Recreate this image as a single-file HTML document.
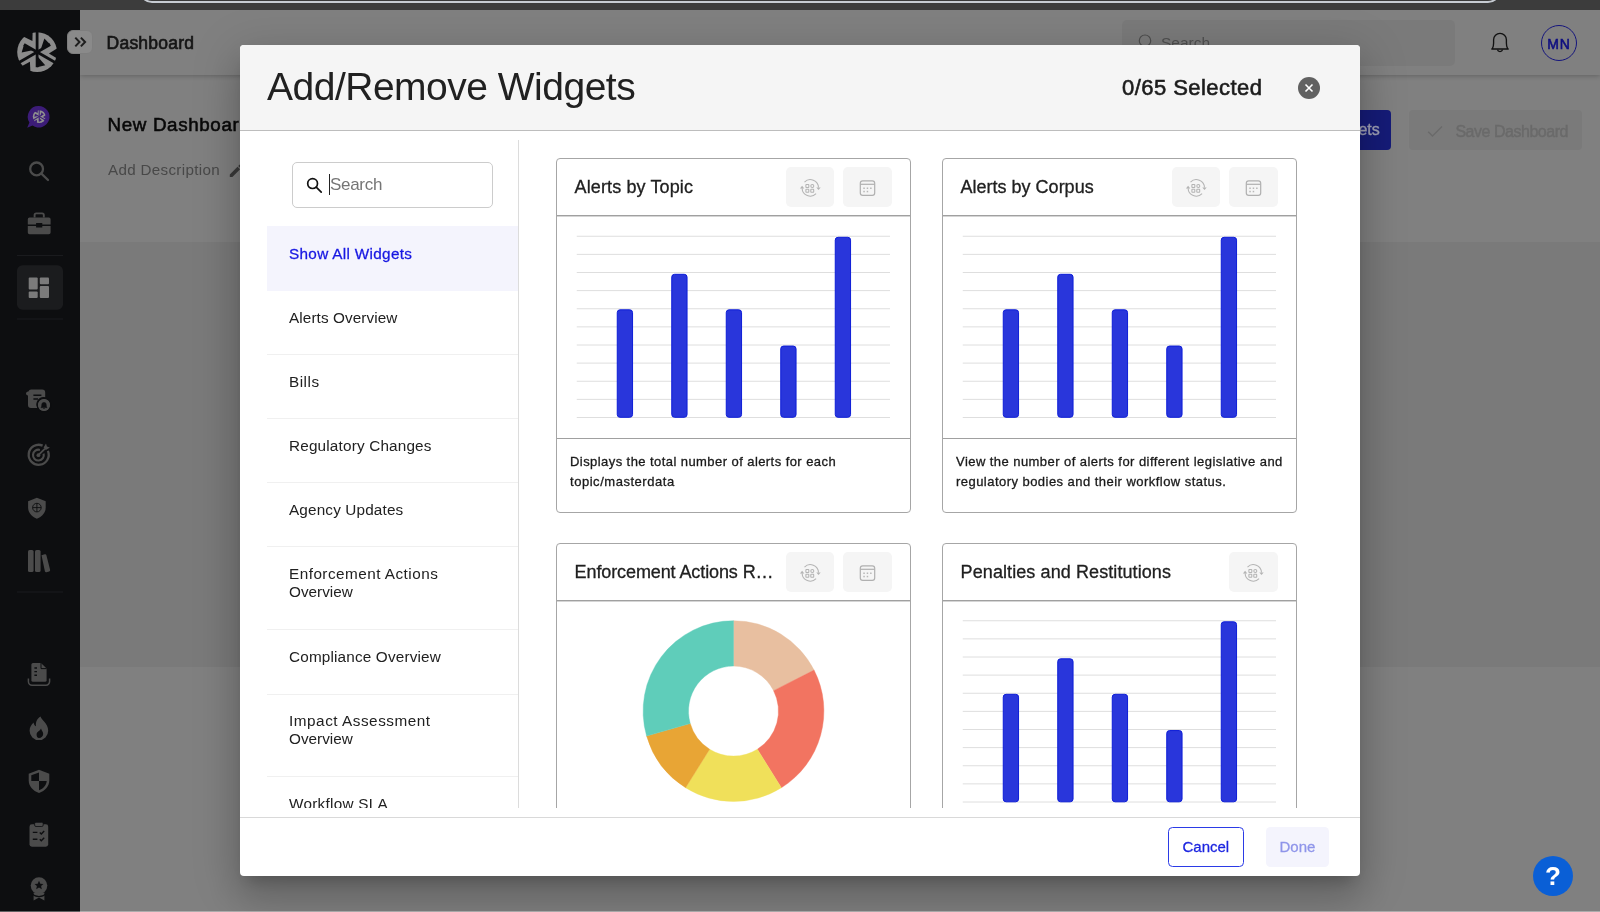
<!DOCTYPE html>
<html lang="en">
<head>
<meta charset="utf-8">
<title>Dashboard</title>
<style>
*{box-sizing:border-box;margin:0;padding:0}
html,body{width:1600px;height:912px;overflow:hidden;background:#808080;font-family:"Liberation Sans",sans-serif;color:#212121}
.abs{position:absolute}
#page{position:absolute;left:0;top:0;width:1600px;height:912px;overflow:hidden;background:#808080}
#chrome{position:absolute;left:0;top:0;width:1600px;height:10px;background:#3c3c3c;overflow:hidden;z-index:50}
#chrome i{position:absolute;left:138.5px;top:-30px;width:1362px;height:33.2px;border:2.2px solid #c6cbd2;border-radius:13px;background:#393939}
#hdr{position:absolute;left:80px;top:10px;width:1520px;height:65px;background:#808080;box-shadow:0 1px 5px rgba(0,0,0,.24);z-index:2}
#band{position:absolute;left:80px;top:242px;width:1520px;height:425px;background:#7a7a7a}
#botline{position:absolute;left:0;top:909px;width:1600px;height:3px;background:#8a8a8a;z-index:1}
.t{position:absolute;white-space:nowrap;line-height:1}
#side{position:absolute;left:0;top:0;width:80px;height:912px;background:#0d0e10;z-index:5}
.sep{position:absolute;left:17px;width:46px;height:1px;background:#1b1c1f}
#active{position:absolute;left:17px;top:255px;width:46px;height:45px;border-radius:6px;background:#1b1c1e}
#toggle{position:absolute;left:66.5px;top:29.7px;width:26px;height:24.5px;border-radius:6px;background:#8a8a8a;border:1px solid #7e7e7e;z-index:6}
#modal{position:absolute;left:240px;top:45px;width:1120px;height:831px;background:#fff;border-radius:4px;z-index:20;
 box-shadow:0 11px 15px -7px rgba(0,0,0,.2),0 24px 38px 3px rgba(0,0,0,.14),0 9px 46px 8px rgba(0,0,0,.12)}
#mh{position:absolute;left:0;top:0;width:1120px;height:86px;background:#f5f5f5;border-bottom:1px solid #bdbdbd;border-radius:4px 4px 0 0}
#scroll{position:absolute;left:0;top:87px;width:1120px;height:676px;overflow:hidden}
#mf{position:absolute;left:0;top:772px;width:1120px;height:59px;border-top:1px solid #d9d9d9}
#title{left:27px;top:22px;font-size:39px;color:#212121}
#sel{left:882px;top:31.8px;font-size:22px;color:#1c1c1c;-webkit-text-stroke:.6px #1c1c1c}
#close{position:absolute;left:1058px;top:32px;width:22px;height:22px;border-radius:50%;background:#616161}
#sbox{position:absolute;left:52px;top:30px;width:201px;height:46px;border:1px solid #ccc;border-radius:5px;background:#fff}
#vdiv{position:absolute;left:278px;top:8px;width:1px;height:700px;background:#dcdcdc}
.li{position:absolute;left:27px;width:251px;border-bottom:1px solid #f0f0f0;font-size:15.3px;line-height:18.2px;color:#212121}
.li span{position:absolute;left:22px;top:19px;white-space:nowrap}
.li.on{background:#f4f4fd;border-bottom:none;color:#1717e2}
.li.on span{-webkit-text-stroke:.28px #1717e2}
.card{position:absolute;width:355px;height:355px;border:1px solid #a6a6a6;border-radius:4px;background:#fff;overflow:hidden}
.card .ch{position:absolute;left:0;top:0;width:353px;height:57px;border-bottom:1px solid #a0a0a0;box-shadow:0 1px 0 rgba(150,150,150,.4)}
.card .ct{position:absolute;left:17.6px;top:19px;font-size:18px;line-height:1;white-space:nowrap;color:#212121;-webkit-text-stroke:.3px #1c1c1c}
.card .cd{position:absolute;left:0;top:279px;width:353px;height:74px;border-top:1px solid #a0a0a0;font-size:13px;line-height:20px;color:#1a1a1a;padding:13.3px 0 0 13px;-webkit-text-stroke:.3px #1a1a1a;white-space:nowrap}
.card .cd span{display:block}
.ib{position:absolute;top:8.1px;width:48.4px;height:39.9px;border-radius:5px;background:#f5f5f5}
.ib svg{position:absolute;left:0;top:0;width:48.5px;height:40px}
.card svg.chart{position:absolute;left:0;top:58px}
#cancel{position:absolute;left:928px;top:9px;width:76px;height:40px;border:1px solid #2b3be6;border-radius:4.5px;color:#1c25e0;font-size:15px;-webkit-text-stroke:.28px #1c25e0}
#done{position:absolute;left:1026px;top:9px;width:63px;height:40px;border-radius:4.5px;background:#f4f4fd;color:#8f95ea;font-size:15px;-webkit-text-stroke:.28px #8f95ea}
#cancel span,#done span{position:absolute;top:10.2px;white-space:nowrap;line-height:18px}
#done span{top:11.2px}
#help{position:absolute;left:1533px;top:856px;width:40px;height:40px;border-radius:50%;background:#0a5fd6;z-index:30;color:#fff;font-weight:bold;font-size:26px;text-align:center;line-height:40px}
#bgz{position:absolute;left:0;top:0;width:1600px;height:912px;z-index:3}
#hsb{position:absolute;left:1122px;top:20px;width:333px;height:45.5px;border-radius:5px;background:#7a7a7a}
#av{position:absolute;left:1541px;top:25px;width:36px;height:36px;border-radius:50%;border:1.2px solid #14147c}
#wbtn{position:absolute;left:1200px;top:110px;width:191.3px;height:40px;border-radius:4px;background:#151b78}
#svbtn{position:absolute;left:1409.4px;top:110px;width:172.5px;height:40px;border-radius:4px;background:#7a7a7a}
#botline{top:910.7px;height:1.3px;background:rgba(255,255,255,.35);z-index:60}
#page{filter:opacity(1)}
#modal,#bgz{will-change:transform}
</style>
</head>
<body>
<div id="page">
<div id="chrome"><i></i></div>
<div id="band"></div>
<div id="hdr"></div>
<div id="botline"></div>
<div id="side"><svg class="abs" style="left:0;top:0" width="80" height="912" viewBox="0 0 80 912"><g transform="translate(37.1 52.1)"><circle r="19.9" fill="#8b8b8b"/><g fill="#0d0e10" transform="rotate(0)"><rect x="-1.39" y="-20.40" width="2.79" height="35.52"/><path d="M0 3.98L0 15.12L8.16 13.13Z"/><path d="M-6.64 20.44L-7.19 9.54L-15.97 14.38Z"/></g><g fill="#0d0e10" transform="rotate(120)"><rect x="-1.39" y="-20.40" width="2.79" height="35.52"/><path d="M0 3.98L0 15.12L8.16 13.13Z"/><path d="M-6.64 20.44L-7.19 9.54L-15.97 14.38Z"/></g><g fill="#0d0e10" transform="rotate(240)"><rect x="-1.39" y="-20.40" width="2.79" height="35.52"/><path d="M0 3.98L0 15.12L8.16 13.13Z"/><path d="M-6.64 20.44L-7.19 9.54L-15.97 14.38Z"/></g></g><path d="M38.8 106.1a10.7 10.7 0 1 1-6.2 19.4l-5.4 2.3 2.2-5.3A10.7 10.7 0 0 1 38.8 106.1z" fill="#3c1c78"/><g transform="translate(39.2 116.6)"><circle r="6.4" fill="#8f8f8f"/><g fill="#3c1c78" transform="rotate(0)"><rect x="-0.51" y="-6.90" width="1.02" height="11.76"/><path d="M0 1.28L0 4.86L2.62 4.22Z"/><path d="M-2.14 6.57L-2.31 3.07L-5.14 4.63Z"/></g><g fill="#3c1c78" transform="rotate(120)"><rect x="-0.51" y="-6.90" width="1.02" height="11.76"/><path d="M0 1.28L0 4.86L2.62 4.22Z"/><path d="M-2.14 6.57L-2.31 3.07L-5.14 4.63Z"/></g><g fill="#3c1c78" transform="rotate(240)"><rect x="-0.51" y="-6.90" width="1.02" height="11.76"/><path d="M0 1.28L0 4.86L2.62 4.22Z"/><path d="M-2.14 6.57L-2.31 3.07L-5.14 4.63Z"/></g></g><g fill="none" stroke="#4b4b4b" stroke-width="2.3"><circle cx="36.6" cy="168.9" r="6.4"/><path d="M41.4 173.6l6.6 6.4" stroke-linecap="round"/></g><path d="M34.6 217.6v-2.6a1.6 1.6 0 0 1 1.6-1.6h6a1.6 1.6 0 0 1 1.6 1.6v2.6" fill="none" stroke="#4b4b4b" stroke-width="1.9"/><path d="M29.6 217.4h19.2a1.8 1.8 0 0 1 1.8 1.8v5.3h-8.3v-1.4h-6.2v1.4h-8.3v-5.3a1.8 1.8 0 0 1 1.8-1.8zM27.8 226.1h8.3v1.5h6.2v-1.5h8.3v6.4a1.8 1.8 0 0 1-1.8 1.8H29.6a1.8 1.8 0 0 1-1.8-1.8z" fill="#4b4b4b"/><rect x="17" y="255" width="46" height="1" fill="#1a1b1e"/><rect x="17" y="318.5" width="46" height="1" fill="#1a1b1e"/><rect x="17" y="591.5" width="46" height="1" fill="#1a1b1e"/><rect x="17" y="265.3" width="46" height="44.4" rx="5.5" fill="#1b1c1e"/><g fill="#7b7b7b"><rect x="28.7" y="277.5" width="9" height="12" rx="1"/><rect x="28.7" y="291.4" width="9" height="6.7" rx="1"/><rect x="39.8" y="277.5" width="9.2" height="6.7" rx="1"/><rect x="39.8" y="286.1" width="9.2" height="12" rx="1"/></g><path d="M31.6 389.6h10.6a3 3 0 0 1 3 3v4.6a7.2 7.2 0 0 0-7.6 10.9H31a3 3 0 0 1-3-3v-9.6h-0.2a2 2 0 0 1-1-3.6 2 2 0 0 1 1.6-.4 3 3 0 0 1 3.2-1.9z" fill="#4b4b4b"/><path d="M33.4 395.2h8M33.4 399h4.6" stroke="#0d0e10" stroke-width="1.5"/><circle cx="44" cy="405" r="6" fill="#4b4b4b"/><circle cx="44" cy="405" r="6.9" fill="none" stroke="#0d0e10" stroke-width="1.1"/><circle cx="44" cy="405" r="6" fill="#4b4b4b"/><path d="M41 407.6c.7-.8.8-1.6.8-3a2.2 2.2 0 0 1 4.4 0c0 1.4.1 2.2.8 3zM43.1 408.5h1.8" fill="#0d0e10" stroke="#0d0e10" stroke-width=".6"/><g fill="none" stroke="#4b4b4b"><path d="M47.9 450.9A10 10 0 1 1 42.6 445.6" stroke-width="2.3"/><path d="M43.6 453.6A5.4 5.4 0 1 1 39.9 449.9" stroke-width="2.1"/></g><circle cx="38.4" cy="455.2" r="1.9" fill="#4b4b4b"/><path d="M38.4 455.2l6.6-6.6" stroke="#4b4b4b" stroke-width="1.8"/><path d="M43.6 447.6l2.4-4 .9 3 3 .9-4 2.4z" fill="#4b4b4b"/><path d="M36.9 497.8l8.8 3.4v6.2c0 5.2-3.6 9.4-8.8 11.3-5.2-1.9-8.8-6.1-8.8-11.3v-6.2z" fill="#4b4b4b"/><g fill="none" stroke="#0d0e10" stroke-width=".9"><circle cx="36.9" cy="507.6" r="4.3"/><path d="M32.6 507.6h8.6M36.9 503.3v8.6"/></g><g fill="#4b4b4b"><rect x="28" y="550" width="5.6" height="22" rx="1.6"/><rect x="35" y="550" width="5.6" height="22" rx="1.6"/><path d="M41.5 555.3l3.3-1a1.3 1.3 0 0 1 1.6.9l3.7 14.6a1.3 1.3 0 0 1-.9 1.6l-2.7.8a1.3 1.3 0 0 1-1.6-.9z"/></g><path d="M33 663h8l5.6 5.6v11.6a1.6 1.6 0 0 1-1.6 1.6H33a1.6 1.6 0 0 1-1.6-1.6V664.6A1.6 1.6 0 0 1 33 663z" fill="#4b4b4b"/><path d="M41 663v5.6h5.6" fill="none" stroke="#0d0e10" stroke-width="1"/><path d="M34.4 668h2.6M34.4 671.6h2.6M34.4 675.2h2.6" stroke="#0d0e10" stroke-width="1.4"/><path d="M28.4 678.6v3a3.6 3.6 0 0 0 3.6 3.6h14a3.6 3.6 0 0 0 3.6-3.6v-3" fill="none" stroke="#4b4b4b" stroke-width="1.5"/><path d="M40.6 716.6c.4 3.4 7.6 6.4 7.6 14.2a9.3 9.3 0 0 1-18.6 0c0-3.6 1.7-6.3 4-8.4.2 1.8 1 3.2 2.4 3.8-.6-4 1.2-7.6 4.6-9.6zM39 738c2.4 0 4.2-1.8 4.2-4 0-2.4-1.6-3.4-2.2-5.600-.8 2.600-4.400 2.800-4.400 6 0 2 .8 3.600 2.400 3.600z" fill="#4b4b4b" fill-rule="evenodd"/><path d="M39 769.8l10.300 3.900v6.500c0 5.800-4.100 10.700-10.300 12.700-6.200-2-10.300-6.900-10.300-12.700v-6.500z" fill="#4b4b4b"/><path d="M39 772.400v8.600h-7.700v-5.700zM39 781h7.700c-.3 4-3.200 7.600-7.700 9.300z" fill="#0d0e10"/><rect x="29.5" y="824.300" width="18.7" height="22.400" rx="2.400" fill="#4b4b4b"/><rect x="34.600" y="822.300" width="8.600" height="4.200" rx="1.400" fill="#4b4b4b" stroke="#0d0e10" stroke-width=".8"/><g stroke="#0d0e10" stroke-width="1.400" fill="none"><path d="M32.800 832.400h4.600M32.800 839.200h4.600M39.800 832.400l1.500 1.500 2.900-3M39.800 839.200l1.500 1.500 2.900-3"/></g><circle cx="39" cy="885.600" r="8.300" fill="#4b4b4b"/><path d="M33.600 892.400v8l5.400-2.800 5.400 2.800v-8z" fill="#4b4b4b"/><path d="M39 880.800l1.300 2.900 3.100.3-2.300 2.100.7 3.100-2.800-1.600-2.800 1.600.7-3.100-2.300-2.100 3.100-.3z" fill="#0d0e10"/><path d="M32 893.600a9.600 9.600 0 0 0 14 0" fill="none" stroke="#0d0e10" stroke-width="1.100"/></svg></div>
<div id="toggle"><svg class="abs" style="left:-1px;top:-1px" width="26" height="24" viewBox="0 0 26 24" fill="none" stroke="#1e1e1e" stroke-width="2"><path d="M8.300 7.600l4.200 4.400-4.200 4.400M13.900 7.600l4.200 4.400-4.200 4.400"/></svg></div>
<div id="bgz">
<div class="t" id="hd" style="letter-spacing:0.219px;left:106.6px;top:35.1px;font-size:17.5px;;color:#151515;-webkit-text-stroke:.65px #151515">Dashboard</div>
<div id="hsb"><svg class="abs" style="left:14px;top:12px" width="22" height="22" viewBox="0 0 22 22" fill="none" stroke="#4d4d4d" stroke-width="1.2"><circle cx="9" cy="8.7" r="5.7"/><path d="M13.2 13l4.6 4.6"/></svg><div class="t" id="hs" style="left:39px;top:14.5px;font-size:15.5px;color:#4f4f4f">Search</div></div>
<svg class="abs" style="left:1486px;top:28px;z-index:3" width="28" height="28" viewBox="0 0 28 28" fill="none" stroke="#111" stroke-width="1.35" stroke-linejoin="round"><path d="M5.3 21h17.4M6.4 20.6c1-1.6 1.2-3 1.2-5.6v-3.2a6.4 6.4 0 0 1 12.8 0v3.2c0 2.6.2 4 1.2 5.6"/><path d="M11.4 21.6a2.7 2.7 0 0 0 5.2 0"/></svg>
<div id="av"><div class="t" id="mn" style="letter-spacing:1.000px;left:5.2px;top:11.3px;font-size:14px;color:#0e0e80;-webkit-text-stroke:.55px #0e0e80">MN</div></div>
<div class="t" id="nd" style="left:107.6px;top:115.6px;font-size:18.8px;;color:#080808;-webkit-text-stroke:.55px #080808;z-index:3"><span id="nd1" style="letter-spacing:0.632px;">New Dashboar</span>d</div>
<div class="t" id="ad" style="letter-spacing:0.314px;left:108px;top:162px;font-size:15.2px;color:#484848;z-index:3">Add Description</div>
<svg class="abs" style="left:228px;top:163px;z-index:3" width="16" height="16" viewBox="0 0 16 16"><path d="M1.8 11.4V14h2.6l7.7-7.7-2.6-2.6zM14.1 4.3a.7.7 0 0 0 0-1l-1.6-1.6a.7.7 0 0 0-1 0l-1.3 1.3 2.6 2.6z" fill="#3a3a3a"/></svg>
<div id="wbtn"><div class="t" id="wb" style="right:11.5px;top:12px;font-size:16px;color:#a0a1b6;-webkit-text-stroke:.4px #a0a1b6">Add/Remove Widgets</div></div>
<div id="svbtn"><svg class="abs" style="left:17px;top:12px" width="18" height="18" viewBox="0 0 18 18" fill="none" stroke="#6a6a6a" stroke-width="1.4"><path d="M2.2 9.8l4.3 4.3 9.5-9.5"/></svg><div class="t" id="sv" style="letter-spacing:-0.469px;left:46px;top:14px;font-size:16px;color:#6a6a6a;-webkit-text-stroke:.45px #6a6a6a">Save Dashboard</div></div>
</div>

<div id="modal">
<div id="mh"><div class="t" id="title" style="letter-spacing:-0.500px;">Add/Remove Widgets</div><div class="t" id="sel" style="letter-spacing:0.450px;">0/65 Selected</div>
<div id="close"><svg width="22" height="22" viewBox="0 0 22 22"><path d="M7.5 7.5l7 7M14.5 7.5l-7 7" stroke="#fff" stroke-width="1.6" fill="none"/></svg></div></div>
<div id="scroll"><div id="sbox"><svg class="abs" style="left:12px;top:13px" width="18" height="18" viewBox="0 0 18 18" fill="none" stroke="#111" stroke-width="1.7"><circle cx="7.6" cy="7.6" r="4.9"/><path d="M11.2 11.2l5 5" stroke-linecap="round"/></svg>
<div class="abs" style="left:36px;top:11px;width:1px;height:21px;background:#222"></div>
<div class="t" id="stxt" style="left:37px;top:13px;font-size:17px;color:#757575;letter-spacing:-0.300px;">Search</div></div><div id="vdiv"></div><div class="li on" style="top:94px;height:65px"><span id="li0a" style="top:19.0px;letter-spacing:0.320px;">Show All Widgets</span></div><div class="li" style="top:159px;height:64px"><span id="li1a" style="top:18.0px;letter-spacing:0.093px;">Alerts Overview</span></div><div class="li" style="top:223px;height:64px"><span id="li2a" style="top:18.0px;letter-spacing:0.500px;">Bills</span></div><div class="li" style="top:287px;height:64px"><span id="li3a" style="top:18.0px;letter-spacing:0.176px;">Regulatory Changes</span></div><div class="li" style="top:351px;height:64px"><span id="li4a" style="top:18.0px;letter-spacing:0.154px;">Agency Updates</span></div><div class="li" style="top:415px;height:83px"><span id="li5a" style="top:18.0px;letter-spacing:0.472px;">Enforcement Actions</span><span id="li5b" style="top:36.2px;">Overview</span></div><div class="li" style="top:498px;height:64.5px"><span id="li6a" style="top:18.0px;letter-spacing:0.167px;">Compliance Overview</span></div><div class="li" style="top:562px;height:83px"><span id="li7a" style="top:18.0px;letter-spacing:0.531px;">Impact Assessment</span><span id="li7b" style="top:36.2px;">Overview</span></div><div class="li" style="top:645px;height:64px"><span id="li8a" style="top:18.0px;letter-spacing:0.273px;">Workflow SLA</span></div><div class="card" style="left:316px;top:26px"><div class="ch"><div class="ct" id="ct0" style="letter-spacing:0.114px;">Alerts by Topic</div><div class="ib" style="left:228.9px"><svg viewBox="0 0 48.5 40" fill="none" stroke="#b4b4b4" stroke-width="1.05"><path d="M18.5 15.1A8.2 8.2 0 0 1 32.5 20.6M30.1 26.7A8.2 8.2 0 0 1 16.1 21.2"/><path d="M30.3 20.4h4.4l-2.2 2.7zM13.9 21.4h4.4l-2.2-2.7z" fill="#b4b4b4" stroke="none"/><rect x="19.9" y="17.5" width="2.9" height="2.9" rx=".4"/><circle cx="26.3" cy="18.9" r="1.5"/><rect x="19.9" y="22.3" width="2.9" height="2.9" rx=".4"/><rect x="24.8" y="22.3" width="2.9" height="2.9" rx=".4"/></svg></div><div class="ib" style="left:286.4px"><svg viewBox="0 0 48.5 40" fill="none" stroke="#b0b0b0" stroke-width="1.2"><rect x="17.3" y="13.9" width="14.4" height="14.4" rx="2.4"/><path d="M17.3 17.3h14.4"/><g fill="#b8b8b8" stroke="none"><rect x="20.3" y="20.5" width="1.5" height="1.5"/><rect x="23.7" y="20.5" width="1.5" height="1.5"/><rect x="27.1" y="20.5" width="1.5" height="1.5"/><rect x="20.3" y="23.8" width="1.5" height="1.5"/><rect x="23.7" y="23.8" width="1.5" height="1.5"/></g></svg></div></div><svg class="chart" width="353" height="221" viewBox="0 0 353 221"><g stroke="#dedede" stroke-width="1"><path d="M19.75 19.25H333.00"/><path d="M19.75 37.38H333.00"/><path d="M19.75 55.50H333.00"/><path d="M19.75 73.62H333.00"/><path d="M19.75 91.75H333.00"/><path d="M19.75 109.88H333.00"/><path d="M19.75 128.00H333.00"/><path d="M19.75 146.12H333.00"/><path d="M19.75 164.25H333.00"/><path d="M19.75 182.38H333.00"/><path d="M19.75 200.50H333.00"/></g><g fill="#2936db" stroke="#0d1dd8" stroke-width="1"><rect x="60.25" y="92.80" width="15.3" height="107.50" rx="2.8"/><rect x="114.75" y="57.30" width="15.3" height="143.00" rx="2.8"/><rect x="169.25" y="92.80" width="15.3" height="107.50" rx="2.8"/><rect x="223.75" y="129.05" width="15.3" height="71.25" rx="2.8"/><rect x="278.25" y="20.30" width="15.3" height="180.00" rx="2.8"/></g></svg><div class="cd"><span id="cd0a" style="letter-spacing:0.430px;">Displays the total number of alerts for each</span><span id="cd0b" style="letter-spacing:0.534px;">topic/masterdata</span></div></div><div class="card" style="left:702px;top:26px"><div class="ch"><div class="ct" id="ct1" style="">Alerts by Corpus</div><div class="ib" style="left:228.9px"><svg viewBox="0 0 48.5 40" fill="none" stroke="#b4b4b4" stroke-width="1.05"><path d="M18.5 15.1A8.2 8.2 0 0 1 32.5 20.6M30.1 26.7A8.2 8.2 0 0 1 16.1 21.2"/><path d="M30.3 20.4h4.4l-2.2 2.7zM13.9 21.4h4.4l-2.2-2.7z" fill="#b4b4b4" stroke="none"/><rect x="19.9" y="17.5" width="2.9" height="2.9" rx=".4"/><circle cx="26.3" cy="18.9" r="1.5"/><rect x="19.9" y="22.3" width="2.9" height="2.9" rx=".4"/><rect x="24.8" y="22.3" width="2.9" height="2.9" rx=".4"/></svg></div><div class="ib" style="left:286.4px"><svg viewBox="0 0 48.5 40" fill="none" stroke="#b0b0b0" stroke-width="1.2"><rect x="17.3" y="13.9" width="14.4" height="14.4" rx="2.4"/><path d="M17.3 17.3h14.4"/><g fill="#b8b8b8" stroke="none"><rect x="20.3" y="20.5" width="1.5" height="1.5"/><rect x="23.7" y="20.5" width="1.5" height="1.5"/><rect x="27.1" y="20.5" width="1.5" height="1.5"/><rect x="20.3" y="23.8" width="1.5" height="1.5"/><rect x="23.7" y="23.8" width="1.5" height="1.5"/></g></svg></div></div><svg class="chart" width="353" height="221" viewBox="0 0 353 221"><g stroke="#dedede" stroke-width="1"><path d="M19.75 19.25H333.00"/><path d="M19.75 37.38H333.00"/><path d="M19.75 55.50H333.00"/><path d="M19.75 73.62H333.00"/><path d="M19.75 91.75H333.00"/><path d="M19.75 109.88H333.00"/><path d="M19.75 128.00H333.00"/><path d="M19.75 146.12H333.00"/><path d="M19.75 164.25H333.00"/><path d="M19.75 182.38H333.00"/><path d="M19.75 200.50H333.00"/></g><g fill="#2936db" stroke="#0d1dd8" stroke-width="1"><rect x="60.25" y="92.80" width="15.3" height="107.50" rx="2.8"/><rect x="114.75" y="57.30" width="15.3" height="143.00" rx="2.8"/><rect x="169.25" y="92.80" width="15.3" height="107.50" rx="2.8"/><rect x="223.75" y="129.05" width="15.3" height="71.25" rx="2.8"/><rect x="278.25" y="20.30" width="15.3" height="180.00" rx="2.8"/></g></svg><div class="cd"><span id="cd1a" style="letter-spacing:0.445px;">View the number of alerts for different legislative and</span><span id="cd1b" style="letter-spacing:0.460px;">regulatory bodies and their workflow status.</span></div></div><div class="card" style="left:316px;top:411px"><div class="ch"><div class="ct" id="ct2" style="letter-spacing:-0.102px;">Enforcement Actions R…</div><div class="ib" style="left:228.9px"><svg viewBox="0 0 48.5 40" fill="none" stroke="#b4b4b4" stroke-width="1.05"><path d="M18.5 15.1A8.2 8.2 0 0 1 32.5 20.6M30.1 26.7A8.2 8.2 0 0 1 16.1 21.2"/><path d="M30.3 20.4h4.4l-2.2 2.7zM13.9 21.4h4.4l-2.2-2.7z" fill="#b4b4b4" stroke="none"/><rect x="19.9" y="17.5" width="2.9" height="2.9" rx=".4"/><circle cx="26.3" cy="18.9" r="1.5"/><rect x="19.9" y="22.3" width="2.9" height="2.9" rx=".4"/><rect x="24.8" y="22.3" width="2.9" height="2.9" rx=".4"/></svg></div><div class="ib" style="left:286.4px"><svg viewBox="0 0 48.5 40" fill="none" stroke="#b0b0b0" stroke-width="1.2"><rect x="17.3" y="13.9" width="14.4" height="14.4" rx="2.4"/><path d="M17.3 17.3h14.4"/><g fill="#b8b8b8" stroke="none"><rect x="20.3" y="20.5" width="1.5" height="1.5"/><rect x="23.7" y="20.5" width="1.5" height="1.5"/><rect x="27.1" y="20.5" width="1.5" height="1.5"/><rect x="20.3" y="23.8" width="1.5" height="1.5"/><rect x="23.7" y="23.8" width="1.5" height="1.5"/></g></svg></div></div><svg class="chart" width="353" height="221" viewBox="0 0 353 221"><path fill="#e8bfa0" stroke="#e8bfa0" stroke-width=".4" d="M176.50 18.70A90.4 90.4 0 0 1 257.05 68.06L216.60 88.67A45 45 0 0 0 176.50 64.10Z"/><path fill="#f27461" stroke="#f27461" stroke-width=".4" d="M257.05 68.06A90.4 90.4 0 0 1 224.40 185.76L200.35 147.26A45 45 0 0 0 216.60 88.67Z"/><path fill="#f0e05a" stroke="#f0e05a" stroke-width=".4" d="M224.40 185.76A90.4 90.4 0 0 1 128.60 185.76L152.65 147.26A45 45 0 0 0 200.35 147.26Z"/><path fill="#e8a535" stroke="#e8a535" stroke-width=".4" d="M128.60 185.76A90.4 90.4 0 0 1 89.60 134.02L133.24 121.50A45 45 0 0 0 152.65 147.26Z"/><path fill="#5fcdba" stroke="#5fcdba" stroke-width=".4" d="M89.60 134.02A90.4 90.4 0 0 1 176.50 18.70L176.50 64.10A45 45 0 0 0 133.24 121.50Z"/></svg></div><div class="card" style="left:702px;top:411px"><div class="ch"><div class="ct" id="ct3" style="letter-spacing:0.090px;">Penalties and Restitutions</div><div class="ib" style="left:286.4px"><svg viewBox="0 0 48.5 40" fill="none" stroke="#b4b4b4" stroke-width="1.05"><path d="M18.5 15.1A8.2 8.2 0 0 1 32.5 20.6M30.1 26.7A8.2 8.2 0 0 1 16.1 21.2"/><path d="M30.3 20.4h4.4l-2.2 2.7zM13.9 21.4h4.4l-2.2-2.7z" fill="#b4b4b4" stroke="none"/><rect x="19.9" y="17.5" width="2.9" height="2.9" rx=".4"/><circle cx="26.3" cy="18.9" r="1.5"/><rect x="19.9" y="22.3" width="2.9" height="2.9" rx=".4"/><rect x="24.8" y="22.3" width="2.9" height="2.9" rx=".4"/></svg></div></div><svg class="chart" width="353" height="221" viewBox="0 0 353 221"><g stroke="#dedede" stroke-width="1"><path d="M19.75 18.75H333.00"/><path d="M19.75 36.88H333.00"/><path d="M19.75 55.00H333.00"/><path d="M19.75 73.12H333.00"/><path d="M19.75 91.25H333.00"/><path d="M19.75 109.38H333.00"/><path d="M19.75 127.50H333.00"/><path d="M19.75 145.62H333.00"/><path d="M19.75 163.75H333.00"/><path d="M19.75 181.88H333.00"/><path d="M19.75 200.00H333.00"/></g><g fill="#2936db" stroke="#0d1dd8" stroke-width="1"><rect x="60.25" y="92.30" width="15.3" height="107.50" rx="2.8"/><rect x="114.75" y="56.80" width="15.3" height="143.00" rx="2.8"/><rect x="169.25" y="92.30" width="15.3" height="107.50" rx="2.8"/><rect x="223.75" y="128.55" width="15.3" height="71.25" rx="2.8"/><rect x="278.25" y="19.80" width="15.3" height="180.00" rx="2.8"/></g></svg></div></div>
<div id="mf"><div id="cancel"><span id="tcancel" style="left:13.5px;">Cancel</span></div><div id="done"><span id="tdone" style="left:13.5px;">Done</span></div></div>
</div>
<div id="help">?</div>
</div>
</body>
</html>
